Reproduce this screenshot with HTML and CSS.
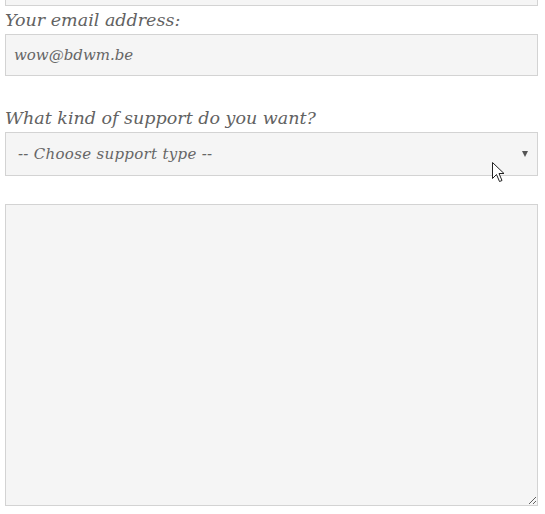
FILE: index.html
```html
<!DOCTYPE html>
<html>
<head>
<meta charset="utf-8">
<link rel="stylesheet" href="styles.css">
</head>
<body>
<form class="form">
  <input class="field field-prev" type="text" value="">
  <label class="label" for="email">Your email address:</label>
  <input class="field" id="email" type="text" value="wow@bdwm.be">
  <label class="label label-gap" for="type">What kind of support do you want?</label>
  <div class="select-wrap">
    <select class="field select" id="type">
      <option>-- Choose support type --</option>
    </select>
    <span class="arrow"></span>
  </div>
  <textarea class="field textarea"></textarea>
</form>
<svg class="cursor" width="13" height="21" viewBox="0 0 13 21">
  <path d="M0.5 0.5 L0.5 16.5 L4.5 12.5 L7.5 19.5 L10 18.5 L7 11.5 L12 11.5 Z" fill="#fff" stroke="#222" stroke-width="1"/>
</svg>
</body>
</html>
```
FILE: styles.css
```css
html, body {
  margin: 0;
  padding: 0;
  background: #fff;
  overflow: hidden;
}
body {
  width: 545px;
  height: 514px;
  position: relative;
}
.form {
  display: flex;
  flex-direction: column;
  padding: 0 7px 0 5px;
  font-family: "DejaVu Serif", serif;
  font-style: italic;
  color: #626262;
}
.field {
  box-sizing: border-box;
  width: 533px;
  margin: 0;
  border: 1px solid #d3d3d3;
  background: #f5f5f5;
  font-family: "DejaVu Serif", serif;
  font-style: italic;
  font-size: 15px;
  color: #666;
  outline: none;
  border-radius: 0;
}
.field-prev {
  height: 42px;
  margin-top: -36px;
}
#email {
  height: 42px;
  padding: 0 8px;
}
.label {
  display: block;
  font-size: 17.5px;
  line-height: 28px;
  height: 28px;
  white-space: nowrap;
}
.label-gap {
  margin-top: 28px;
}
.select-wrap {
  position: relative;
  width: 533px;
}
.select {
  display: block;
  height: 44px;
  padding: 0 30px 0 12px;
  letter-spacing: 0.3px;
  -webkit-appearance: none;
  appearance: none;
}
.arrow {
  position: absolute;
  right: 10px;
  top: 19px;
  width: 0;
  height: 0;
  border-left: 3px solid transparent;
  border-right: 3px solid transparent;
  border-top: 6px solid #555;
}
.textarea {
  margin-top: 28px;
  height: 302px;
  resize: both;
  padding: 8px;
}
.cursor {
  position: absolute;
  left: 492px;
  top: 162px;
}
```
